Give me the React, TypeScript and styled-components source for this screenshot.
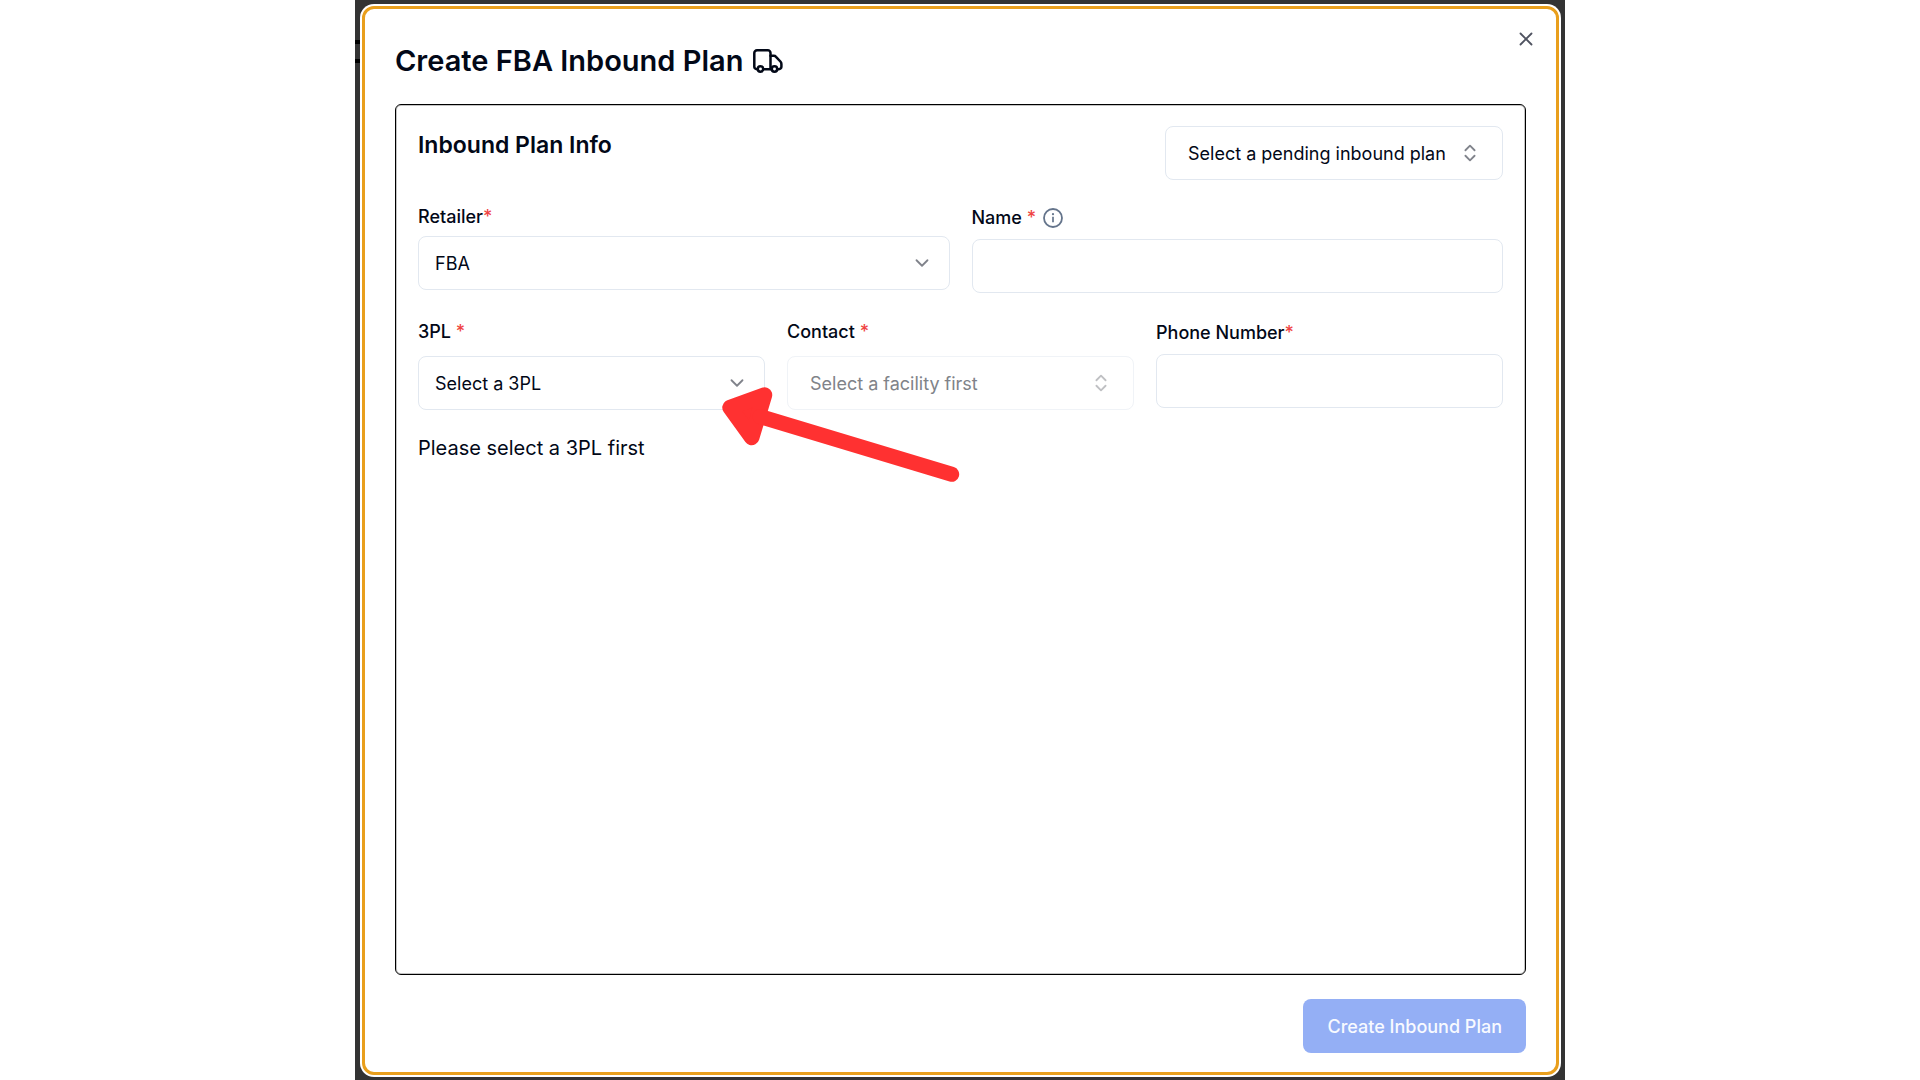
import React from "react";
import styled, { createGlobalStyle } from "styled-components";
import { ChevronDown, ChevronsUpDown, X } from "lucide-react";

const GlobalStyle = createGlobalStyle`
  *, *::before, *::after { box-sizing: border-box; }
  body {
    margin: 0;
    background: #fff;
    color: #020817;
    font-family: Inter, "Liberation Sans", sans-serif;
  }
  h1, h2, p { margin: 0; }
  button, input, select { font-family: inherit; }
`;

const Backdrop = styled.div`
  position: relative;
  display: flex;
  width: 100%;
  max-width: 1210px;
  min-height: 100vh;
  margin: 0 auto;
  padding: 6px 6px 5px 7px;
  background: #333;
`;

const BackdropEdge = styled.span`
  position: absolute;
  top: 40px;
  left: 0;
  width: 5px;
  height: 23px;
  border: solid #000;
  border-width: 4px 0;
`;

const Dialog = styled.main`
  position: relative;
  display: flex;
  flex: 1;
  flex-direction: column;
  min-width: 0;
  padding: 30px 30px 19px;
  border: 3px solid #e99f1c;
  border-radius: 12px;
  background: #fff;
  box-shadow: 0 0 0 2px #fff;
`;

const CloseButton = styled.button`
  position: absolute;
  top: 19px;
  right: 19px;
  display: flex;
  padding: 0;
  border: 0;
  background: none;
  color: #4f5360;
  cursor: pointer;
`;

const Title = styled.h1`
  display: flex;
  align-items: center;
  gap: 10px;
  margin-bottom: 21px;
  font-size: 29px;
  font-weight: 600;
  line-height: 44px;
`;

const Panel = styled.section`
  flex: 1;
  padding: 21px 22px;
  border: 1px solid #000;
  border-radius: 6px;
  box-shadow: inset 0 0 0 1px #c4c4c4;
`;

const PanelHeader = styled.header`
  display: flex;
  align-items: flex-start;
  justify-content: space-between;
  margin-bottom: 22px;
`;

const PanelTitle = styled.h2`
  font-size: 23px;
  font-weight: 600;
  line-height: 38px;
`;

const Form = styled.form`
  display: flex;
  flex-direction: column;
  gap: 24px;
`;

const FieldRow = styled.div<{ $columns: number }>`
  display: grid;
  grid-template-columns: repeat(${(p) => p.$columns}, minmax(0, 1fr));
  align-items: start;
  gap: 22px;
`;

const Field = styled.div<{ $gap?: number }>`
  position: relative;
  display: flex;
  flex-direction: column;
  gap: ${(p) => p.$gap ?? 6}px;
`;

const LabelLine = styled.div<{ $tall?: boolean }>`
  display: flex;
  align-items: center;
  gap: 6px;
  height: ${(p) => (p.$tall ? 31 : 28)}px;
  color: #64748b;
`;

const Label = styled.label`
  color: #020817;
  font-size: 18px;
  font-weight: 500;
`;

const Required = styled.span`
  color: #ef4444;
`;

const SelectShell = styled.div`
  position: relative;
  display: flex;
`;

const SelectBox = styled.select<{ $inset?: boolean }>`
  width: 100%;
  height: 54px;
  padding: 0 ${(p) => (p.$inset ? "56px 0 22px" : "44px 0 16px")};
  border: 1px solid #e2e8f0;
  border-radius: 8px;
  appearance: none;
  background: #fff;
  color: #020817;
  font-size: 18px;
  font-weight: 400;

  &:disabled {
    border-color: #f0f3f7;
    color: #808389;
    opacity: 1;
  }
`;

const SelectIcon = styled.span<{ $inset?: boolean; $faint?: boolean }>`
  position: absolute;
  top: 16px;
  right: ${(p) => (p.$inset ? 22 : 17)}px;
  display: flex;
  color: ${(p) => (p.$faint ? "#bfc0c3" : "#80838b")};
  pointer-events: none;
`;

const TextInput = styled.input`
  width: 100%;
  height: 54px;
  padding: 0 16px;
  border: 1px solid #e2e8f0;
  border-radius: 8px;
  background: #fff;
  font-size: 18px;
`;

const Hint = styled.p`
  font-size: 20px;
  line-height: 28px;
`;

const Footer = styled.footer`
  display: flex;
  justify-content: flex-end;
  margin-top: 24px;
`;

const SubmitButton = styled.button`
  height: 54px;
  padding: 0 24px;
  border: 0;
  border-radius: 8px;
  background: #94aff5;
  color: #f8faff;
  font-size: 18px;
  font-weight: 500;
`;

const Arrow = styled.svg`
  position: absolute;
  z-index: 1;
  top: 67px;
  right: -197px;
  pointer-events: none;
`;

function TruckIcon() {
  return (
    <svg
      width="30"
      height="24"
      viewBox="0 0 30 24"
      fill="none"
      stroke="currentColor"
      strokeWidth="2.5"
      strokeLinecap="round"
      strokeLinejoin="round"
      aria-hidden="true"
    >
      <path d="M4.5 20.2h-.7a2.5 2.5 0 0 1-2.5-2.5V4a2.7 2.7 0 0 1 2.7-2.7h10.8A2.7 2.7 0 0 1 17.5 4v16" />
      <path d="M10.5 20.2h8" />
      <path d="M17.5 6.8h3.2c.9 0 1.7.3 2.3 1l4.4 4.7c.6.7 1 1.5 1 2.4v2.8a2.5 2.5 0 0 1-2.5 2.5h-1.2" />
      <circle cx="7.5" cy="20" r="2.7" />
      <circle cx="21.5" cy="20" r="2.7" />
    </svg>
  );
}

function InfoIcon() {
  return (
    <svg width="22" height="22" viewBox="0 0 22 22" fill="none" stroke="currentColor" aria-hidden="true">
      <circle cx="11" cy="11" r="9" strokeWidth="1.8" />
      <path d="M11 9.8v5.4" strokeWidth="1.7" />
      <circle cx="11" cy="7.2" r="1.1" fill="currentColor" stroke="none" />
    </svg>
  );
}

type PickerProps = {
  id?: string;
  text: string;
  label?: string;
  combo?: boolean;
  disabled?: boolean;
};

function Picker({ id, text, label, combo, disabled }: PickerProps) {
  const Icon = combo ? ChevronsUpDown : ChevronDown;
  return (
    <SelectShell>
      <SelectBox id={id} aria-label={label} $inset={combo} disabled={disabled}>
        <option>{text}</option>
      </SelectBox>
      <SelectIcon $inset={combo} $faint={disabled}>
        <Icon size={22} />
      </SelectIcon>
    </SelectShell>
  );
}

export default function App() {
  return (
    <>
      <GlobalStyle />
      <Backdrop>
        <BackdropEdge />
        <Dialog>
          <CloseButton type="button" aria-label="Close">
            <X size={22} />
          </CloseButton>
          <Title>
            Create FBA Inbound Plan
            <TruckIcon />
          </Title>
          <Panel>
            <PanelHeader>
              <PanelTitle>Inbound Plan Info</PanelTitle>
              <Picker combo label="Pending inbound plan" text="Select a pending inbound plan" />
            </PanelHeader>
            <Form id="plan-form">
              <FieldRow $columns={2}>
                <Field>
                  <LabelLine>
                    <Label htmlFor="retailer">
                      Retailer<Required>*</Required>
                    </Label>
                  </LabelLine>
                  <Picker id="retailer" text="FBA" />
                </Field>
                <Field>
                  <LabelLine $tall>
                    <Label htmlFor="plan-name">
                      Name <Required>*</Required>
                    </Label>
                    <InfoIcon />
                  </LabelLine>
                  <TextInput id="plan-name" type="text" />
                </Field>
              </FieldRow>
              <FieldRow $columns={3}>
                <Field $gap={11}>
                  <LabelLine>
                    <Label htmlFor="three-pl">
                      3PL <Required>*</Required>
                    </Label>
                  </LabelLine>
                  <Picker id="three-pl" text="Select a 3PL" />
                  <Arrow width="242" height="100" viewBox="0 0 242 100" aria-hidden="true">
                    <path
                      d="M10 23.5 44.5 11 31.7 53.5Z"
                      fill="#ff3131"
                      stroke="#ff3131"
                      strokeWidth="15.5"
                      strokeLinejoin="round"
                    />
                    <path d="M40 32.5 231.7 90.3" stroke="#ff3131" strokeWidth="15" strokeLinecap="round" />
                  </Arrow>
                </Field>
                <Field $gap={11}>
                  <LabelLine>
                    <Label htmlFor="contact">
                      Contact <Required>*</Required>
                    </Label>
                  </LabelLine>
                  <Picker id="contact" combo disabled text="Select a facility first" />
                </Field>
                <Field>
                  <LabelLine $tall>
                    <Label htmlFor="phone">
                      Phone Number<Required>*</Required>
                    </Label>
                  </LabelLine>
                  <TextInput id="phone" type="tel" />
                </Field>
              </FieldRow>
              <Hint>Please select a 3PL first</Hint>
            </Form>
          </Panel>
          <Footer>
            <SubmitButton type="submit" form="plan-form" disabled>
              Create Inbound Plan
            </SubmitButton>
          </Footer>
        </Dialog>
      </Backdrop>
    </>
  );
}
